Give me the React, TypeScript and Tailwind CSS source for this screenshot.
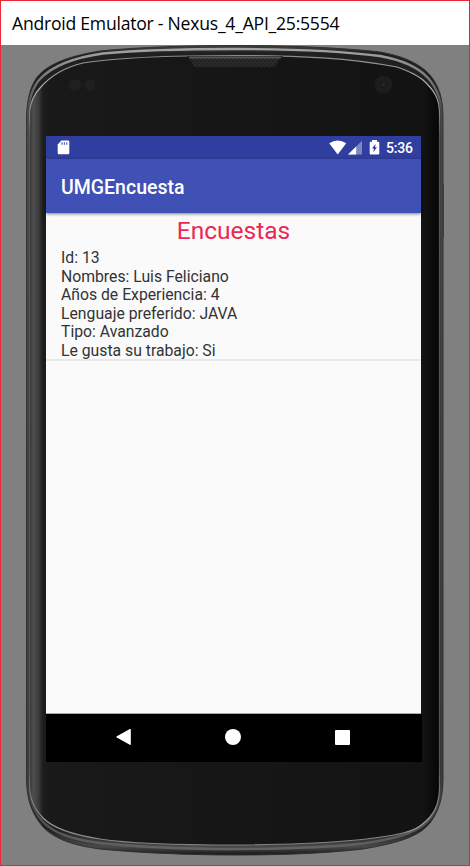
const OUTER =
  "M26.5 118 C27 96 32 83 38 76 C50 62 75 55 100 51 C140 47 190 45.5 235 45.5 C290 45.5 345 48 380 52 C404 56 420 64 430 75 C439 86 443 98 443 118 V778 C443 800 438 812 430 823 C420 835 404 842 363 849 C320 854 275 855 235 855 C190 855 140 853 100 849 C70 845 54 838 43 827 C32 814 26.5 800 26.5 778 Z";
const MID =
  "M28 115 C29 95 34 85 41 78 C55 64 78 57 103 53.5 C140 50 190 49 235 49 C290 49 345 51.5 380 56 C402 60 418 67 428 78 C437 88 441.5 99 441.5 115 V780 C441.5 799 437 810 430 819 C420 831 404 837 363 843.5 C320 848 275 849 235 849 C190 849 140 847 100 843 C70 839 54 833 43 822 C34 812 28 799 28 780 Z";
const INNER =
  "M29.5 112 C31 99 35 93 40 88 C52 74 66 67 83 63 C120 57 180 55.5 235 55.5 C300 55.5 350 58 397 67 C412 72 418 76 423 80 C434 90 439 98 439.5 112 V785 C440 800 437 809 430 817 C420 828 412 831 403 833 C370 841 310 844.5 235 845 C170 845 120 842 100 839 C80 836 55 830 43 818 C34 808 30 800 29.5 785 Z";

function DeviceBody() {
  return (
    <svg className="absolute left-0 top-0" width="470" height="866" viewBox="0 0 470 866" aria-hidden="true">
      <defs>
        <linearGradient id="rim" x1="0" y1="45" x2="0" y2="855" gradientUnits="userSpaceOnUse">
          <stop offset="0" stopColor="#444" />
          <stop offset="0.01" stopColor="#202020" />
          <stop offset="0.97" stopColor="#222" />
          <stop offset="0.99" stopColor="#48494b" />
          <stop offset="1" stopColor="#171717" />
        </linearGradient>
        <linearGradient id="face" x1="29" y1="0" x2="440" y2="0" gradientUnits="userSpaceOnUse">
          <stop offset="0" stopColor="#303030" />
          <stop offset="0.01" stopColor="#4e4e4e" />
          <stop offset="0.022" stopColor="#3e3e3e" />
          <stop offset="0.034" stopColor="#1d1d1d" />
          <stop offset="0.05" stopColor="#191919" />
          <stop offset="0.5" stopColor="#161616" />
          <stop offset="0.96" stopColor="#131313" />
          <stop offset="1" stopColor="#050505" />
        </linearGradient>
        <linearGradient id="shine" x1="0" y1="46" x2="0" y2="850" gradientUnits="userSpaceOnUse">
          <stop offset="0" stopColor="#a8a8a8" />
          <stop offset="0.03" stopColor="#858585" />
          <stop offset="0.08" stopColor="#484848" />
          <stop offset="0.92" stopColor="#3b3b3b" />
          <stop offset="1" stopColor="#626365" />
        </linearGradient>
        <linearGradient id="edge" x1="0" y1="55" x2="0" y2="845" gradientUnits="userSpaceOnUse">
          <stop offset="0" stopColor="#85888c" />
          <stop offset="0.04" stopColor="#b4b4b4" />
          <stop offset="0.1" stopColor="#555" />
          <stop offset="0.9" stopColor="#555" />
          <stop offset="0.97" stopColor="#999" />
          <stop offset="1" stopColor="#7d7f82" />
        </linearGradient>
        <pattern id="mesh" width="4" height="4" patternUnits="userSpaceOnUse">
          <rect width="4" height="4" fill="#2b2b2b" />
          <rect x="0.4" y="0.4" width="1.3" height="1.3" fill="#151515" />
          <rect x="2.4" y="2.4" width="1.3" height="1.3" fill="#151515" />
        </pattern>
      </defs>
      <path d="M442 182 h1 l.6 3 v51 l-.6 3 h-1 Z" fill="#292929" />
      <path d={OUTER} fill="url(#rim)" stroke="#303030" strokeWidth="1" />
      <path d={MID} fill="none" stroke="url(#shine)" strokeWidth="2.4" />
      <path d={INNER} fill="url(#face)" stroke="url(#edge)" strokeWidth="1.2" />
      <path d="M186 56 C190 57 191 61 193 65 Q194 67 197 67 H271 Q275 67 277 63 Q279 57 284 56 Z" fill="url(#mesh)" />
      <path d="M189 57.5 H281" stroke="#515359" strokeWidth="2" />
      <circle cx="75" cy="85" r="6" fill="#202020" />
      <circle cx="90" cy="85" r="5.5" fill="#202020" />
      <circle cx="383.5" cy="84.5" r="9" fill="#1d1d1d" />
      <circle cx="383.5" cy="84.5" r="4" fill="#1a1a20" />
      <circle cx="383.5" cy="84.5" r="1.5" fill="#292744" />
    </svg>
  );
}

function StatusBar() {
  return (
    <div className="flex h-[23px] items-center bg-[#303f9f] pl-[11px] pr-2 text-white">
      <svg width="13" height="15" viewBox="0 0 13 15">
        <path d="M4.4 .5 H11 Q12.3 .5 12.3 1.8 V13 Q12.3 14.3 11 14.3 H1.9 Q.7 14.3 .7 13 V4.4 Z" fill="#fff" />
        <path d="M5 2.3 v2.5 M7.4 2.3 v2.5 M9.8 2.3 v2.5" stroke="#5662ae" strokeWidth="1.2" />
      </svg>
      <svg className="ml-auto" width="18" height="15" viewBox="0 0 18 15">
        <path d="M.2 3.3 Q8.7 -2.5 17.2 3.3 L8.7 14.5 Z" fill="#fff" />
      </svg>
      <svg className="ml-[1px]" width="14" height="15" viewBox="0 0 14 15">
        <path d="M14 .8 V14.5 H0 Z" fill="#7c86c3" />
        <path d="M8.2 6.5 V14.5 H0 Z" fill="#fff" />
      </svg>
      <svg className="ml-[7px]" width="11" height="15" viewBox="0 0 11 15">
        <path d="M3 0 H8 V1.7 H9.3 Q10.3 1.7 10.3 2.7 V13.5 Q10.3 14.6 9.3 14.6 H1.7 Q.7 14.6 .7 13.5 V2.7 Q.7 1.7 1.7 1.7 H3 Z" fill="#fff" />
        <path d="M6.6 3.8 L3 8.5 H5 L4.3 12.3 L8 7.3 H6 Z" fill="#303f9f" />
      </svg>
      <span className="ml-[6px] w-[27px] whitespace-nowrap pt-px text-[14px] font-medium leading-[22px] tracking-[-0.2px]">5:36</span>
    </div>
  );
}

const answers = [
  "Id: 13",
  "Nombres: Luis Feliciano",
  "Años de Experiencia: 4",
  "Lenguaje preferido: JAVA",
  "Tipo: Avanzado",
  "Le gusta su trabajo: Si",
];

function NavigationBar() {
  return (
    <nav className="flex h-12 w-[376px] items-center bg-black pb-0.5 pl-[69px]">
      <svg width="17" height="18" viewBox="0 0 17 18">
        <path d="M1.3 8.9 Q1.3 8.6 1.8 8.3 L14.8 1 Q15.8 .6 15.8 1.6 V16.2 Q15.8 17.3 14.8 16.8 L1.8 9.5 Z" fill="#fff" />
      </svg>
      <div className="ml-[93px] size-4 rounded-full bg-white" />
      <div className="ml-[94px] size-[15px] rounded-[1px] bg-white" />
    </nav>
  );
}

export default function App() {
  return (
    <div className="flex h-[866px] w-[470px] flex-col overflow-hidden bg-[#808080]">
      <div className="relative h-[866px]">
        <DeviceBody />
        <div className="relative flex h-[866px] flex-col border border-[#ec2939] border-r-[#d42d3a] border-b-[#d42d3a]">
          <header className="flex h-11 shrink-0 items-center bg-white pl-[11px] font-['Open_Sans',sans-serif] text-[17.6px] text-black">
            <span className="whitespace-nowrap tracking-[-0.24px]">Android Emulator - Nexus_4_API_25:5554</span>
          </header>
          <main className="ml-[45px] mt-[91px] flex h-[626px] w-[375px] flex-col font-[Roboto,sans-serif]">
            <StatusBar />
            <div className="z-10 flex h-[54px] items-center bg-[#3f51b5] pl-[15px] shadow-[0_1px_3px_rgba(0,0,0,0.5)]">
              <h1 className="pt-[3px] text-[19.5px] font-medium text-white">UMGEncuesta</h1>
            </div>
            <section className="h-[501px] border-b border-[#aaa] bg-[#fafafa] text-[#333]">
              <h2 className="h-[35px] text-center text-[24.5px] leading-[35px] text-[#eb2855]">Encuestas</h2>
              <div className="h-[113px] border-b-2 border-[#e8e8e8] pl-[15px] pt-px text-[15.75px] leading-[18.6px]">
                {answers.map((line) => (
                  <p key={line} className="whitespace-nowrap">{line}</p>
                ))}
              </div>
            </section>
            <NavigationBar />
          </main>
        </div>
      </div>
    </div>
  );
}
